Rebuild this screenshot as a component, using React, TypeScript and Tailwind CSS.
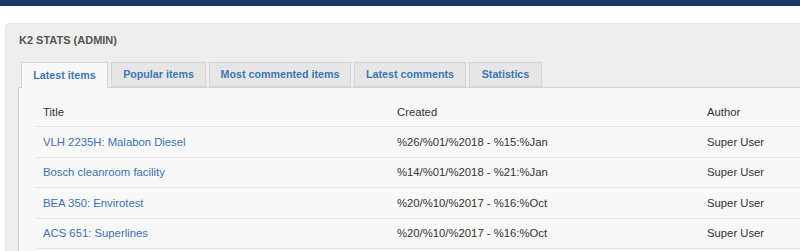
import React from "react";

const tabs = [
  { t: "Latest items", w: "w-[87px]" },
  { t: "Popular items", w: "w-[95px]" },
  { t: "Most commented items", w: "w-[142px]" },
  { t: "Latest comments", w: "w-[112px]" },
  { t: "Statistics", w: "w-[73px]" },
];
const rows = [
  { t: "VLH 2235H: Malabon Diesel", c: "%26/%01/%2018 - %15:%Jan", h: "h-[31px]" },
  { t: "Bosch cleanroom facility", c: "%14/%01/%2018 - %21:%Jan", h: "h-[30px]" },
  { t: "BEA 350: Envirotest", c: "%20/%10/%2017 - %16:%Oct", h: "h-[31px]" },
  { t: "ACS 651: Superlines", c: "%20/%10/%2017 - %16:%Oct", h: "h-[30px]" },
];

export default function App() {
  return (
    <div className="w-[800px] h-[251px] overflow-hidden bg-white" style={{ fontFamily: '"Liberation Sans", Arial, sans-serif' }}>
      <div className="h-[6px] bg-[#1a3867]" />
      <div className="pt-[17px] pl-[5px]">
        <div className="w-[820px] h-[300px] bg-[#eeeeee] border border-[#e3e3e3] rounded-[4px]">
          <div className="pt-[9px] pl-[13px] text-[11px] leading-[14px] font-bold text-[#555555]">K2 STATS (ADMIN)</div>
          <div className="mt-[15px] ml-[12px]">
            <div className="flex gap-[3px] pl-[3px] relative z-10">
              {tabs.map((t, i) => (
                <div
                  key={t.t}
                  className={
                    i === 0
                      ? `${t.w} h-[26px] flex items-center justify-center whitespace-nowrap border border-b-0 border-[#d5d5d5] bg-[#f8f8f8] text-[10.7px] font-bold text-[#3c77b5]`
                      : `${t.w} h-[25px] flex items-center justify-center whitespace-nowrap border border-[#d5d5d5] bg-[#e6e6e6] text-[10.7px] font-bold text-[#3c77b5]`
                  }
                >
                  {t.t}
                </div>
              ))}
            </div>
            <div className="-mt-px border-t border-l border-[#d5d5d5] bg-[#f8f8f8] pt-[8px] pl-[17px] h-[200px]">
              <div className="text-[11.3px] text-[#333333]">
                <div className="grid grid-cols-[354px_310px_1fr] h-[31px] pt-[3px] items-center pl-[7px] border-b border-[#e2e2e2]">
                  <div>Title</div>
                  <div>Created</div>
                  <div>Author</div>
                </div>
                {rows.map((r) => (
                  <div key={r.t} className={`grid grid-cols-[354px_310px_1fr] ${r.h} items-center pl-[7px] border-b border-[#e2e2e2]`}>
                    <div className="text-[#3a72b3]">{r.t}</div>
                    <div>{r.c}</div>
                    <div>Super User</div>
                  </div>
                ))}
              </div>
            </div>
          </div>
        </div>
      </div>
    </div>
  );
}
